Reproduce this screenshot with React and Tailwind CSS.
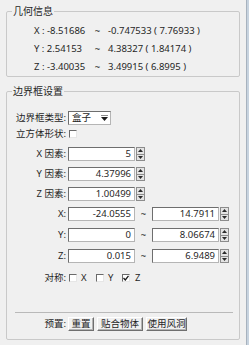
import React from 'react';

const font = "font-['Noto_Sans','Noto_Sans_CJK_SC',sans-serif]";

function Arrow({ down }) {
  return (
    <svg width="5" height="3" viewBox="0 0 5 3">
      <path d={down ? 'M0 0 L5 0 L2.5 3Z' : 'M2.5 0 L5 3 L0 3Z'} fill="#2a2a2a" />
    </svg>
  );
}

function Spin() {
  return (
    <div className="ml-[1px] flex h-[14px] w-[9px] flex-col border border-[#8c8c8c] bg-[#e4e4e4]">
      <div className="flex flex-1 items-center justify-center border-b border-[#8c8c8c]">
        <Arrow />
      </div>
      <div className="flex flex-1 items-center justify-center">
        <Arrow down />
      </div>
    </div>
  );
}

function Field({ value }) {
  return (
    <div className="flex h-[14px] w-[67px] items-center justify-end border border-[#b5b5b5] border-l-[#6e6e6e] border-t-[#6e6e6e] bg-white pr-[3px] leading-[12px]">
      {value}
    </div>
  );
}

function Check({ checked }) {
  return (
    <div className="flex h-[8px] w-[8px] items-center justify-center border border-[#e6e6e6] border-l-[#6a6a6a] border-t-[#6a6a6a] bg-white">
      {checked && (
        <svg width="6" height="6" viewBox="0 0 6 6">
          <path d="M0.5 3 L2.3 5 L5.5 0.8" fill="none" stroke="#1a1a1a" strokeWidth="1.3" />
        </svg>
      )}
    </div>
  );
}

function Row({ label, className = '', children }) {
  return (
    <div className={`flex h-[14px] items-center ${className}`}>
      <span className="w-[59px] text-right leading-[12px]">{label}</span>
      {children}
    </div>
  );
}

function Btn({ w, children }) {
  return (
    <div
      className={`flex h-[14px] ${w} items-center justify-center border border-white border-b-[#6f6f6f] border-r-[#6f6f6f] bg-[#f0f0f0] leading-[12px] shadow-[inset_-1px_-1px_0_#b4b4b4]`}
    >
      {children}
    </div>
  );
}

const info = [
  ['X : -8.51686', '-0.747533 ( 7.76933 )'],
  ['Y : 2.54153', '4.38327 ( 1.84174 )'],
  ['Z : -3.40035', '3.49915 ( 6.8995 )'],
];

const ranges = [
  ['X:', '-24.0555', '14.7911'],
  ['Y:', '0', '8.06674'],
  ['Z:', '0.015', '6.9489'],
];

export default function App() {
  return (
    <div className={`flex h-[345px] w-[249px] bg-[#f0f0f0] text-[9.5px] text-[#1f1f1f] ${font}`}>
      <div className="w-[246px]">
        {/* geometry info */}
        <fieldset className="ml-[6px] mt-[5px] w-[234px] rounded-[2px] border border-[#c9c9c9]">
          <legend className="ml-[5px] px-[1px] text-[10px] leading-[12px]">几何信息</legend>
          <div className="mt-[5px] pl-[27px]">
            {info.map(([a, b]) => (
              <div key={a} className="flex h-[18px] items-center leading-[18px]">
                <span className="w-[59px]">{a}</span>
                <span className="w-[9px] text-center">~</span>
                <span className="pl-[6px]">{b}</span>
              </div>
            ))}
          </div>
        </fieldset>

        {/* bounding box settings */}
        <fieldset className="ml-[6px] mt-[8px] w-[234px] rounded-[2px] border border-[#c9c9c9] pb-[8px]">
          <legend className="ml-[5px] px-[1px] text-[10px] leading-[12px]">边界框设置</legend>

          <Row label="边界框类型:" className="mt-[14px]">
            <div className="ml-[2px] flex h-[14px] w-[43px] items-center justify-between border border-[#b5b5b5] border-l-[#6e6e6e] border-t-[#6e6e6e] bg-white pl-[3px] pr-[2px] leading-[12px]">
              <span>盒子</span>
              <svg width="7" height="6" viewBox="0 0 7 6">
                <path d="M0 0 H7" stroke="#1a1a1a" strokeWidth="1" />
                <path d="M0 2 H7 L3.5 6Z" fill="#1a1a1a" />
              </svg>
            </div>
          </Row>

          <Row label="立方体形状:" className="mt-[2px]">
            <div className="ml-[3px]">
              <Check />
            </div>
          </Row>

          {[
            ['X 因素:', '5'],
            ['Y 因素:', '4.37996'],
            ['Z 因素:', '1.00499'],
          ].map(([l, v]) => (
            <Row key={l} label={l} className="mt-[6px]">
              <div className="ml-[2px] flex">
                <Field value={v} />
                <Spin />
              </div>
            </Row>
          ))}

          {ranges.map(([l, a, b], i) => (
            <Row key={l} label={l} className={i === 0 ? 'mt-[6px]' : 'mt-[7px]'}>
              <div className="ml-[2px] flex items-center">
                <Field value={a} />
                <span className="w-[17px] text-center leading-[12px]">~</span>
                <Field value={b} />
                <Spin />
              </div>
            </Row>
          ))}

          <Row label="对称:" className="mt-[8px]">
            <div className="ml-[3px] flex items-center leading-[12px]">
              <Check />
              <span className="ml-[4px] w-[15px]">X</span>
              <Check />
              <span className="ml-[4px] w-[14px]">Y</span>
              <Check checked />
              <span className="ml-[5px]">Z</span>
            </div>
          </Row>

          <div className="ml-[8px] mt-[27px] w-[218px] border-t border-[#b9b9b9]" />

          <Row label="预置:" className="mt-[4px]">
            <div className="ml-[2px] flex gap-[3px]">
              <Btn w="w-[26px]">重置</Btn>
              <Btn w="w-[46px]">贴合物体</Btn>
              <Btn w="w-[41px]">使用风洞</Btn>
            </div>
          </Row>
        </fieldset>
      </div>
      <div className="w-[3px] border-l border-[#a7b2be] bg-[#c7d3df]" />
    </div>
  );
}
